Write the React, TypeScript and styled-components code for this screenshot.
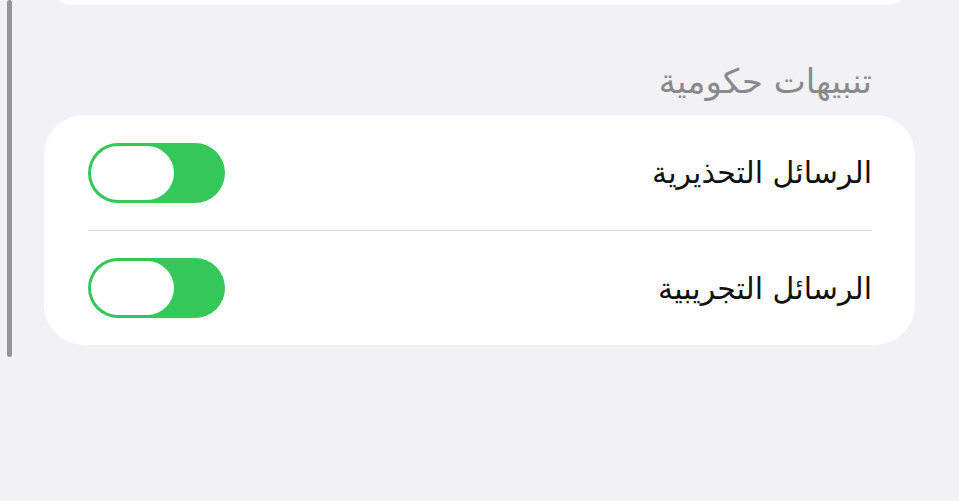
import styled, { createGlobalStyle } from 'styled-components'

const GlobalStyle = createGlobalStyle`
  html, body {
    margin: 0;
    padding: 0;
    background: #f1f1f6;
  }
  body {
    font-family: "DejaVu Sans", "Noto Sans", sans-serif;
  }
`

const Screen = styled.div`
  position: relative;
  width: 959px;
  height: 501px;
  overflow: hidden;
  background: #f1f1f6;
  direction: rtl;
`

// scroll indicator sits over the content, left edge
const ScrollIndicator = styled.div`
  position: absolute;
  left: 7px;
  top: 0;
  width: 5px;
  height: 357px;
  border-radius: 3px;
  background: #949499;
`

const Content = styled.div`
  display: flex;
  flex-direction: column;
  padding: 0 44px;
  margin-top: -55px;
`

const PrevCard = styled.div`
  height: 60px;
  background: #ffffff;
  border-radius: 40px;
`

const SectionHeader = styled.div`
  padding: 0 43px;
  height: 110px;
  display: flex;
  align-items: flex-end;
  padding-bottom: 14px;
  box-sizing: border-box;
  font-size: 34px;
  color: #8a8a8e;
`

const Group = styled.div`
  background: #ffffff;
  border-radius: 40px;
  padding: 0 43px 0 44px;
`

const Row = styled.div`
  height: 115px;
  display: flex;
  align-items: center;
  justify-content: space-between;
  box-sizing: border-box;

  & + & {
    border-top: 1px solid #dcdce0;
  }
`

const Label = styled.span`
  font-size: 30px;
  color: #111111;
`

const Track = styled.div<{ $on: boolean }>`
  width: 137px;
  height: 60px;
  border-radius: 30px;
  background: ${p => (p.$on ? '#34c759' : '#e9e9eb')};
  padding: 3px;
  box-sizing: border-box;
  display: flex;
  justify-content: ${p => (p.$on ? 'flex-end' : 'flex-start')};
`

const Knob = styled.div`
  width: 83px;
  height: 54px;
  border-radius: 27px;
  background: #ffffff;
`

const rows = [
  { id: 'alerts', label: 'الرسائل التحذيرية', on: true },
  { id: 'test', label: 'الرسائل التجريبية', on: true },
]

export default function App() {
  return (
    <>
      <GlobalStyle />
      <Screen>
        <Content>
          <PrevCard />
          <SectionHeader>تنبيهات حكومية</SectionHeader>
          <Group>
            {rows.map(r => (
              <Row key={r.id}>
                <Label>{r.label}</Label>
                <Track $on={r.on}>
                  <Knob />
                </Track>
              </Row>
            ))}
          </Group>
        </Content>
        <ScrollIndicator />
      </Screen>
    </>
  )
}
